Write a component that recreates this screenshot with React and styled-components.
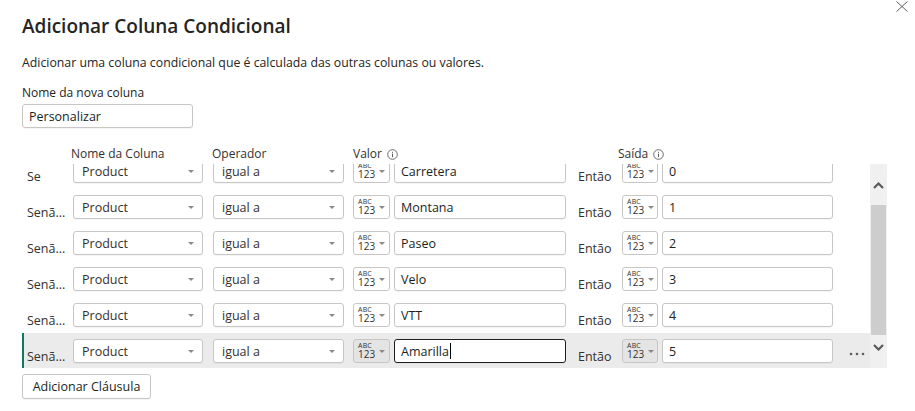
import React from 'react';
import styled, { createGlobalStyle } from 'styled-components';

const GlobalStyle = createGlobalStyle`
	body {
		margin: 0;
		background: #ffffff;
		font-family: "Open Sans", "Noto Sans", sans-serif;
		color: #252423;
	}
`;

const Dialog = styled.div`
	position: relative;
	width: 915px;
	height: 411px;
	box-sizing: border-box;
	padding: 13px 0 0 22px;
	overflow: hidden;
`;

const CloseButton = styled.button`
	position: absolute;
	top: 1px;
	right: 7px;
	width: 12px;
	height: 12px;
	padding: 0;
	border: none;
	background: none;
	display: flex;
`;

const Title = styled.h1`
	margin: 0;
	font-size: 19px;
	line-height: 26px;
	font-weight: 600;
	color: #252423;
`;

const Description = styled.p`
	margin: 15px 0 0;
	font-size: 12.3px;
	line-height: 18px;
	color: #252423;
`;

const FieldLabel = styled.div`
	margin-top: 12px;
	font-size: 12px;
	line-height: 18px;
	color: #252423;
`;

const NameInput = styled.div`
	margin-top: 2px;
	width: 171px;
	height: 24px;
	box-sizing: border-box;
	border: 1px solid #c8c6c4;
	border-radius: 3px;
	padding: 0 6px;
	display: flex;
	align-items: center;
	font-size: 12.5px;
	color: #201f1e;
	box-shadow: 0 1px 0 rgba(0, 0, 0, 0.04);
`;

const HeaderRow = styled.div`
	margin-top: 18px;
	height: 16px;
	display: grid;
	grid-template-columns: 49px 141px 141px 265px auto;
	align-items: center;
`;

const HeaderCell = styled.div`
	grid-column: ${props => props.col};
	display: flex;
	align-items: center;
	gap: 5px;
	font-size: 12px;
	line-height: 16px;
	color: #323130;
`;

const ListFrame = styled.div`
	margin-top: 2px;
	width: 865px;
	display: flex;
`;

const Viewport = styled.div`
	flex: 1;
	height: 204px;
	overflow: hidden;
`;

const List = styled.div`
	margin-top: -11px;
`;

const Row = styled.div`
	height: 36px;
	display: flex;
	align-items: center;
	box-sizing: border-box;
	padding-left: 3px;
	border-left: 2px solid ${props => props.selected ? '#117865' : 'transparent'};
	background: ${props => props.selected ? '#ebebeb' : 'transparent'};
`;

const RowLabel = styled.div`
	align-self: flex-end;
	margin-bottom: 3px;
	width: 46px;
	font-size: 12.5px;
	line-height: 18px;
	color: #323130;
	white-space: nowrap;
`;

const ThenLabel = styled(RowLabel)`
	width: 44px;
	margin-left: 12px;
`;

const Select = styled.div`
	width: ${props => props.width}px;
	margin-left: ${props => props.gap || 0}px;
	height: 24px;
	box-sizing: border-box;
	border: 1px solid #c8c6c4;
	border-radius: 3px;
	background: #ffffff;
	display: flex;
	align-items: center;
	justify-content: space-between;
	padding: 0 8px 0 8px;
	font-size: 12.5px;
	color: #323130;
	box-shadow: 0 1px 0 rgba(0, 0, 0, 0.04);
`;

const TypeButton = styled.div`
	width: ${props => props.width}px;
	margin-left: ${props => props.gap || 0}px;
	height: 24px;
	box-sizing: border-box;
	border: 1px solid #c8c6c4;
	border-radius: 3px;
	background: ${props => props.selected ? '#e4e4e4' : 'transparent'};
	display: flex;
	align-items: center;
	padding-left: 4px;
	gap: 4px;
`;

const TypeGlyph = styled.div`
	display: flex;
	flex-direction: column;
	align-items: flex-start;
	padding-bottom: 2px;
	font-family: "Open Sans", sans-serif;
	color: #323130;
	span:first-child {
		font-size: 7px;
		line-height: 7px;
		letter-spacing: 0.2px;
	}
	span:last-child {
		font-size: 10px;
		line-height: 10px;
	}
`;

const TextBox = styled.div`
	width: ${props => props.width}px;
	margin-left: 4px;
	height: 24px;
	box-sizing: border-box;
	border: 1px solid ${props => props.focused ? '#201f1e' : '#c8c6c4'};
	border-radius: 3px;
	background: #ffffff;
	display: flex;
	align-items: center;
	padding: 0 6px;
	font-size: 12.5px;
	color: #201f1e;
	box-shadow: 0 1px 0 rgba(0, 0, 0, 0.04);
`;

const Cursor = styled.span`
	display: inline-block;
	width: 1px;
	height: 16px;
	background: #000000;
	margin-left: 1px;
`;

const MoreButton = styled.div`
	margin-left: 16px;
	display: flex;
	align-items: center;
	height: 24px;
	padding-top: 6px;
`;

const Scrollbar = styled.div`
	width: 17px;
	height: 204px;
	background: #f0f0f0;
	display: flex;
	flex-direction: column;
`;

const ScrollArrow = styled.div`
	height: ${props => props.height}px;
	display: flex;
	align-items: ${props => props.up ? 'flex-end' : 'flex-start'};
	justify-content: center;
	padding: ${props => props.up ? '0 0 16px' : '9px 0 0'};
	box-sizing: border-box;
`;

const ScrollThumb = styled.div`
	height: 130px;
	margin: 0 1px 0 1px;
	background: #cdcdcd;
`;

const AddButton = styled.button`
	margin-top: 6px;
	width: 129px;
	height: 25px;
	box-sizing: border-box;
	border: 1px solid #c8c6c4;
	border-radius: 3px;
	background: #ffffff;
	font-family: "Open Sans", sans-serif;
	font-size: 12.5px;
	color: #201f1e;
	padding: 0;
	box-shadow: 0 1px 0 rgba(0, 0, 0, 0.04);
`;

const Caret = () => (
	<svg width="6" height="3" viewBox="0 0 6 3">
		<path d="M0 0 L6 0 L3 3 Z" fill="#8a8886" />
	</svg>
);

const InfoIcon = () => (
	<svg width="11" height="11" viewBox="0 0 11 11">
		<circle cx="5.5" cy="5.5" r="4.8" fill="none" stroke="#605e5c" strokeWidth="0.9" />
		<rect x="5" y="4.6" width="1" height="3.6" fill="#605e5c" />
		<rect x="5" y="2.8" width="1" height="1" fill="#605e5c" />
	</svg>
);

const Chevron = ({ up }) => (
	<svg width="11" height="7" viewBox="0 0 11 7">
		<path d={up ? 'M1 6 L5.5 1.5 L10 6' : 'M1 1 L5.5 5.5 L10 1'} fill="none" stroke="#5a5a5a" strokeWidth="2.2" />
	</svg>
);

const TypeSelector = ({ width, gap, selected }) => (
	<TypeButton width={width} gap={gap} selected={selected}>
		<TypeGlyph>
			<span>ABC</span>
			<span>123</span>
		</TypeGlyph>
		<Caret />
	</TypeButton>
);

const rules = [
	{ label: 'Se', value: 'Carretera', out: '0' },
	{ label: 'Senã...', value: 'Montana', out: '1' },
	{ label: 'Senã...', value: 'Paseo', out: '2' },
	{ label: 'Senã...', value: 'Velo', out: '3' },
	{ label: 'Senã...', value: 'VTT', out: '4' },
	{ label: 'Senã...', value: 'Amarilla', out: '5', selected: true },
];

const App = () => {
	return (
		<Dialog>
			<GlobalStyle />
			<CloseButton aria-label="Fechar">
				<svg width="12" height="11" viewBox="0 0 12 11">
					<path d="M0.5 0.5 L11.5 10.5 M11.5 0.5 L0.5 10.5" stroke="#605e5c" strokeWidth="1" />
				</svg>
			</CloseButton>
			<Title>Adicionar Coluna Condicional</Title>
			<Description>Adicionar uma coluna condicional que é calculada das outras colunas ou valores.</Description>
			<FieldLabel>Nome da nova coluna</FieldLabel>
			<NameInput>Personalizar</NameInput>
			<HeaderRow>
				<HeaderCell col={2}>Nome da Coluna</HeaderCell>
				<HeaderCell col={3}>Operador</HeaderCell>
				<HeaderCell col={4}>Valor <InfoIcon /></HeaderCell>
				<HeaderCell col={5}>Saída <InfoIcon /></HeaderCell>
			</HeaderRow>
			<ListFrame>
				<Viewport>
					<List>
						{rules.map((rule, i) => (
							<Row key={i} selected={rule.selected}>
								<RowLabel>{rule.label}</RowLabel>
								<Select width={130}>Product <Caret /></Select>
								<Select width={131} gap={10}>igual a <Caret /></Select>
								<TypeSelector width={37} gap={9} selected={rule.selected} />
								<TextBox width={172} focused={rule.selected}>
									{rule.value}
									{rule.selected && <Cursor />}
								</TextBox>
								<ThenLabel>Então</ThenLabel>
								<TypeSelector width={36} selected={rule.selected} />
								<TextBox width={171}>{rule.out}</TextBox>
								{rule.selected && (
									<MoreButton>
										<svg width="16" height="4" viewBox="0 0 16 4">
											<circle cx="2" cy="2" r="1.3" fill="#605e5c" />
											<circle cx="8" cy="2" r="1.3" fill="#605e5c" />
											<circle cx="14" cy="2" r="1.3" fill="#605e5c" />
										</svg>
									</MoreButton>
								)}
							</Row>
						))}
					</List>
				</Viewport>
				<Scrollbar>
					<ScrollArrow up height={41}><Chevron up /></ScrollArrow>
					<ScrollThumb />
					<ScrollArrow height={33}><Chevron /></ScrollArrow>
				</Scrollbar>
			</ListFrame>
			<AddButton>Adicionar Cláusula</AddButton>
		</Dialog>
	);
};

export default App;
